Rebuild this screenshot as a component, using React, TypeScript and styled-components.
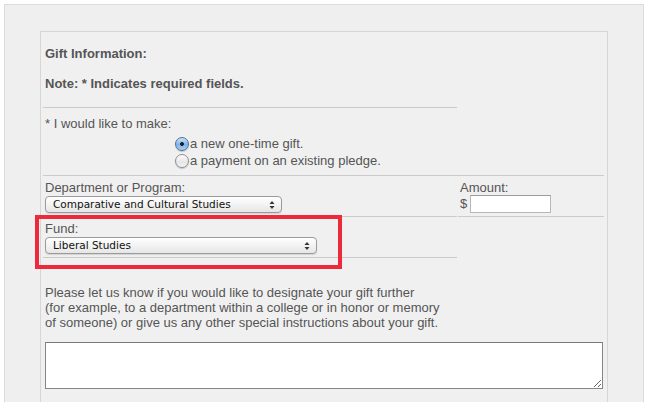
import React from "react";
import styled, { createGlobalStyle } from "styled-components";

const GlobalStyle = createGlobalStyle`
  html, body {
    margin: 0;
    padding: 0;
    overflow: hidden;
    background: #fff;
  }
  body {
    font-family: "Liberation Sans", Arial, Helvetica, sans-serif;
    font-size: 13px;
    color: #555;
  }
`;

const Page = styled.div`
  margin: 4px 4px 0;
  padding: 26px 35px 0;
  height: 398px;
  box-sizing: border-box;
  background: #efefef;
  border: 1px solid #dcdcdc;
  border-bottom: none;
`;

const FormBox = styled.div`
  height: 100%;
  box-sizing: border-box;
  background: #f0f0f0;
  border: 1px solid #d6d6d6;
  border-bottom: none;
  padding: 0 4px 0 2px;
  display: grid;
  grid-template-columns: 414px 146px;
  column-gap: 1px;
  align-content: start;
`;

const Cell = styled.div<{ $span?: boolean; $line?: boolean }>`
  position: relative;
  grid-column: ${(p) => (p.$span ? "1 / -1" : "auto")};
  border-bottom: ${(p) => (p.$line ? "1px solid #cbcbcb" : "none")};
  padding: 4px 2px 3px;
  line-height: 16px;
`;

const Heading = styled.p`
  margin: 14px 0 0;
  font-weight: bold;
  line-height: 16px;
`;

const HeaderCell = styled(Cell)`
  padding: 0 2px 15px;
`;

const MakeCell = styled(Cell)`
  padding: 8px 2px 6px;
`;

const RadioList = styled.div`
  display: flex;
  flex-direction: column;
  padding: 3px 0 0 130px;
`;

const RadioRow = styled.label`
  display: flex;
  align-items: center;
  height: 17px;
`;

const Radio = styled.span<{ $checked?: boolean }>`
  width: 12px;
  height: 12px;
  margin-right: 1px;
  border-radius: 50%;
  border: 1px solid ${(p) => (p.$checked ? "#4f6f96" : "#8d8d8d")};
  background: ${(p) =>
    p.$checked
      ? "radial-gradient(circle at 50% 50%, #1d2430 0 1.6px, transparent 2.2px), linear-gradient(#cfe3f7, #7fb4ea 55%, #a9d0f6)"
      : "linear-gradient(#fdfdfd, #e6e6e6 60%, #f4f4f4)"};
  box-shadow: 0 1px 1px rgba(0, 0, 0, 0.18);
  flex: none;
`;

const Label = styled.div`
  line-height: 16px;
`;

const SelectBox = styled.div<{ $width: number }>`
  position: relative;
  width: ${(p) => p.$width}px;
  height: 15px;
  box-sizing: content-box;
  border: 1px solid #9b9b9b;
  border-radius: 4px;
  background: linear-gradient(#ffffff, #f3f3f3 50%, #e6e6e6);
  box-shadow: 0 1px 1px rgba(0, 0, 0, 0.12);
  font-family: "DejaVu Sans", "Lucida Grande", sans-serif;
  font-size: 10.5px;
  line-height: 15px;
  color: #111;
  padding-left: 7px;
  display: flex;
  align-items: center;
  justify-content: space-between;
`;

const Arrows = styled.svg`
  margin-right: 6px;
`;

const AmountRow = styled.div`
  display: flex;
  align-items: center;
  gap: 3px;
  margin-top: -1px;
`;

const AmountInput = styled.input`
  width: 77px;
  height: 16px;
  border: 1px solid #b7b7b7;
  border-top-color: #9c9c9c;
  background: #fff;
  padding: 0 1px;
  margin: 0;
  outline: none;
`;

const InfoCell = styled(Cell)`
  padding: 27px 2px 0;
`;

const Info = styled.p`
  margin: 0;
  line-height: 15px;
`;

const Notes = styled.textarea`
  display: block;
  box-sizing: border-box;
  width: 558px;
  height: 47px;
  margin: 12px 0 0;
  border: 1px solid #858585;
  border-top-color: #7a7a7a;
  background: #fff;
  resize: both;
  outline: none;
`;

const Highlight = styled.div`
  position: absolute;
  left: -8px;
  top: -2px;
  width: 299px;
  height: 46px;
  border: 4px solid #eb2a3b;
  pointer-events: none;
`;

function SelectArrows() {
  return (
    <Arrows width="6" height="10" viewBox="0 0 6 10">
      <path d="M3 1 L5.5 4 H0.5 Z" fill="#333" />
      <path d="M3 9 L5.5 6 H0.5 Z" fill="#333" />
    </Arrows>
  );
}

function Select({ value, width }: { value: string; width: number }) {
  return (
    <SelectBox $width={width}>
      <span>{value}</span>
      <SelectArrows />
    </SelectBox>
  );
}

export default function App() {
  return (
    <>
      <GlobalStyle />
      <Page>
        <FormBox>
          <HeaderCell $line>
            <Heading>Gift Information:</Heading>
            <Heading>Note: * Indicates required fields.</Heading>
          </HeaderCell>
          <Cell />

          <MakeCell $span $line>
            <Label>* I would like to make:</Label>
            <RadioList>
              <RadioRow>
                <Radio $checked />
                a new one-time gift.
              </RadioRow>
              <RadioRow>
                <Radio />
                a payment on an existing pledge.
              </RadioRow>
            </RadioList>
          </MakeCell>

          <Cell $line>
            <Label>Department or Program:</Label>
            <Select value="Comparative and Cultural Studies" width={228} />
          </Cell>
          <Cell $line>
            <Label>Amount:</Label>
            <AmountRow>
              $<AmountInput type="text" />
            </AmountRow>
          </Cell>

          <Cell $line>
            <Label>Fund:</Label>
            <Select value="Liberal Studies" width={263} />
            <Highlight />
          </Cell>
          <Cell />

          <InfoCell $span>
            <Info>
              Please let us know if you would like to designate your gift further
              <br />
              (for example, to a department within a college or in honor or memory
              <br />
              of someone) or give us any other special instructions about your gift.
            </Info>
            <Notes />
          </InfoCell>
        </FormBox>
      </Page>
    </>
  );
}
